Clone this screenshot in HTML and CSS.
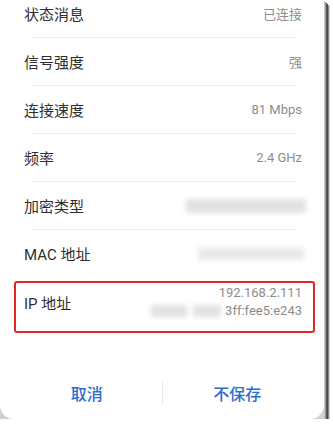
FILE: index.html
```html
<!DOCTYPE html>
<html lang="zh-CN">
<head>
  <meta charset="UTF-8">
  <meta name="viewport" content="width=device-width, initial-scale=1">
  <title>WLAN 详情</title>
  <link rel="stylesheet" href="styles.css">
</head>
<body>

  <div class="frame">
    <div class="dialog">
      <div class="list">
        <div class="row first">
          <span class="label">状态消息</span>
          <span class="value">已连接</span>
        </div>
        <div class="divider"></div>
        <div class="row">
          <span class="label">信号强度</span>
          <span class="value">强</span>
        </div>
        <div class="divider"></div>
        <div class="row">
          <span class="label">连接速度</span>
          <span class="value">81 Mbps</span>
        </div>
        <div class="divider"></div>
        <div class="row">
          <span class="label">频率</span>
          <span class="value">2.4 GHz</span>
        </div>
        <div class="divider"></div>
        <div class="row">
          <span class="label">加密类型</span>
          <span class="blur blur-enc"></span>
        </div>
        <div class="divider"></div>
        <div class="row">
          <span class="label">MAC 地址</span>
          <span class="blur blur-mac"></span>
        </div>
        <div class="row ip">
          <span class="label">IP 地址</span>
          <div class="value lines">
            <span>192.168.2.111</span>
            <span><span class="blur blur-ip"></span><span class="blur blur-ip short"></span>3ff:fee5:e243</span>
          </div>
        </div>
      </div>

      <div class="actions">
        <button class="btn">取消</button>
        <span class="sep"></span>
        <button class="btn">不保存</button>
      </div>
    </div>
  </div>

</body>
</html>
```

FILE: styles.css
```css
* {
  box-sizing: border-box;
}

body {
  margin: 0;
  background-color: #fff;
  font-family: Roboto, "Noto Sans CJK SC", sans-serif;
  overflow: hidden;
}

.frame {
  width: 324px;
  height: 419px;
  background-color: #cfcfd6;
  box-shadow: 1px 1px 0 #c4c4c4, 2px 2px 0 #9c9c9c, 3px 3px 0 #5a5a5a,
    4px 4px 0 #4a4a4a, 5px 5px 0 #8a8a8a, 6px 6px 0 #d0d0d0;
}

.dialog {
  height: 100%;
  background-color: #fff;
  border-radius: 0 0 14px 14px;
  display: flex;
  flex-direction: column;
  overflow: hidden;
}

.row {
  display: flex;
  align-items: center;
  justify-content: space-between;
  height: 47px;
  padding: 0 22px 0 24px;
}

.row.first {
  margin-top: -10px;
}

.divider {
  height: 1px;
  margin: 0 28px 0 32px;
  background-color: #ededed;
}

.label {
  font-size: 15px;
  color: #2e2e2e;
}

.value {
  font-size: 13px;
  color: #8c8c8c;
}

.row.ip {
  height: 52px;
  margin: 4px 9px 0 14px;
  padding: 0 11px 10px 8px;
  border: 2px solid #e02828;
  border-radius: 3px;
}

.lines {
  display: flex;
  flex-direction: column;
  align-items: flex-end;
  line-height: 18px;
}

.lines span {
  display: flex;
  align-items: center;
}

.blur {
  display: inline-block;
  background-color: #e2e2e2;
  filter: blur(2.5px);
}

.blur-enc {
  width: 120px;
  height: 14px;
  margin-right: -4px;
}

.blur-mac {
  width: 106px;
  height: 12px;
  background-color: #e9e9e9;
  margin-right: -2px;
}

.blur-ip {
  width: 36px;
  height: 12px;
  margin-right: 6px;
}

.blur-ip.short {
  width: 28px;
  margin-right: 4px;
}

.actions {
  margin-top: auto;
  margin-bottom: 2px;
  height: 48px;
  padding: 0 12px;
  display: flex;
  align-items: center;
}

.btn {
  flex: 1;
  background: none;
  border: none;
  padding: 0;
  font-family: "Noto Sans CJK SC", sans-serif;
  font-size: 16px;
  font-weight: 500;
  color: #2a6dd2;
  cursor: pointer;
}

.sep {
  width: 1px;
  height: 23px;
  background-color: #e6e6e6;
}
```
